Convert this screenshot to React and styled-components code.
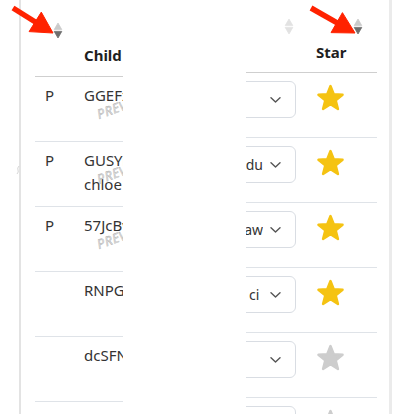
import React from 'react';
import styled, { createGlobalStyle } from 'styled-components';

const Global = createGlobalStyle`
  html, body { margin: 0; padding: 0; background: #fff; }
  body { font-family: "Noto Sans", "Open Sans", sans-serif; }
`;

const Page = styled.div`
  position: relative;
  width: 401px;
  height: 414px;
  overflow: hidden;
  background: #fff;
`;

const Frame = styled.div`
  margin-left: 19px;
  width: 373px;
  height: 414px;
  box-sizing: border-box;
  border-left: 2px solid #e3e3e3;
  border-right: 3px solid #ebebeb;
  padding: 0 12px 0 14px;
  display: flex;
`;

const Pane = styled.div`
  flex: 0 0 ${(p) => p.$width}px;
  overflow: hidden;
`;

const Spacer = styled.div`
  flex: 1;
`;

const Header = styled.div`
  display: grid;
  grid-template-columns: ${(p) => p.$cols};
  padding-top: ${(p) => p.$top}px;
  padding-bottom: ${(p) => p.$bottom}px;
  border-bottom: 1px solid #cfcfcf;
`;

const HeaderCell = styled.div`
  display: flex;
  flex-direction: column;
  align-items: ${(p) => (p.$end ? 'flex-end' : 'flex-start')};
  gap: ${(p) => p.$gap}px;
  padding-left: ${(p) => p.$pl || 0}px;
  padding-right: ${(p) => p.$pr || 0}px;
`;

const SortSlot = styled.div`
  height: 17px;
  display: flex;
  align-self: ${(p) => (p.$end ? 'flex-end' : 'auto')};
  margin-right: ${(p) => p.$mr || 0}px;
`;

const Label = styled.div`
  height: 20px;
  line-height: 20px;
  font-size: 15px;
  font-weight: 700;
  color: #1f1f1f;
  white-space: nowrap;
`;

const Row = styled.div`
  display: grid;
  grid-template-columns: ${(p) => p.$cols};
  height: 64px;
  border-bottom: 1px solid #dfe3e8;
`;

const TextCell = styled.div`
  position: relative;
  padding: 6px 10px;
  font-size: 15px;
  line-height: 24px;
  color: #333;
  word-break: break-word;
`;

const Stamp = styled.span`
  position: absolute;
  left: 21px;
  top: 31px;
  font-size: 13px;
  line-height: 14px;
  letter-spacing: 0.5px;
  font-style: italic;
  color: #e6e6e6;
  -webkit-text-stroke: 0.4px #a8a8a8;
  transform: rotate(-20deg);
  transform-origin: left top;
  white-space: nowrap;
`;

const SelectCell = styled.div`
  display: flex;
  justify-content: flex-end;
  align-items: flex-start;
  padding: 8px 10px 0 0;
`;

const Select = styled.div`
  flex: 0 0 100px;
  height: 37px;
  box-sizing: border-box;
  border: 1px solid #d9dde3;
  border-radius: 6px;
  display: flex;
  align-items: center;
  background: #fff;
`;

const Value = styled.div`
  flex: 1;
  min-width: 0;
  display: flex;
  justify-content: flex-end;
  overflow: hidden;
  font-size: 14px;
  color: #333;
  span {
    flex-shrink: 0;
    white-space: pre;
  }
`;

const ChevronBox = styled.div`
  flex: 0 0 32px;
  box-sizing: border-box;
  padding-left: 7px;
  display: flex;
  align-items: center;
`;

const StarCell = styled.div`
  padding: 10px 0 0 10px;
`;

const Overlay = styled.svg`
  position: absolute;
  left: 0;
  top: 0;
  pointer-events: none;
`;

const Grip = styled.svg`
  position: absolute;
  left: 16px;
  top: 165px;
`;

const Sorter = ({ active }) => (
  <svg width="10" height="17" viewBox="0 0 10 17">
    <path d="M5 1 L8.8 7.6 L1.2 7.6 Z" fill={active ? '#cbcbcb' : '#e2e2e2'} stroke={active ? '#cbcbcb' : '#e2e2e2'} strokeLinejoin="round" strokeWidth="0.8" />
    <path d="M1.2 9.4 L8.8 9.4 L5 16 Z" fill={active ? '#6e6e6e' : '#e2e2e2'} stroke={active ? '#6e6e6e' : '#e2e2e2'} strokeLinejoin="round" strokeWidth="0.8" />
  </svg>
);

const Chevron = () => (
  <svg width="11" height="6" viewBox="0 0 11 6">
    <polyline points="1,0.8 5.5,5 10,0.8" fill="none" stroke="#555" strokeWidth="1.4" strokeLinecap="round" strokeLinejoin="round" />
  </svg>
);

const STAR_POINTS = '12,2.5 14.7,9.28 21.99,9.76 16.37,14.42 18.17,21.49 12,17.6 5.83,21.49 7.63,14.42 2.01,9.76 9.3,9.28';

const Star = ({ on }) => {
  const c = on ? '#f5c312' : '#cdcdcd';
  return (
    <svg width="29" height="29" viewBox="0 0 24 24">
      <polygon points={STAR_POINTS} fill={c} stroke={c} strokeWidth="2" strokeLinejoin="round" />
    </svg>
  );
};

const Arrow = ({ x1, y1, x2, y2 }) => {
  const dx = x2 - x1;
  const dy = y2 - y1;
  const len = Math.hypot(dx, dy);
  const ux = dx / len;
  const uy = dy / len;
  const head = 21;
  const half = 11.5;
  const bx = x2 - ux * head;
  const by = y2 - uy * head;
  const px = -uy;
  const py = ux;
  return (
    <g fill="#ff2200" stroke="#ff2200">
      <line x1={x1} y1={y1} x2={bx + ux * 3} y2={by + uy * 3} strokeWidth="5.5" strokeLinecap="butt" />
      <polygon
        points={`${x2},${y2} ${bx + px * half},${by + py * half} ${bx - px * half},${by - py * half}`}
        strokeWidth="1"
        strokeLinejoin="round"
      />
    </g>
  );
};

const LEFT_COLS = '39px 120px';
const RIGHT_COLS = '60px 71px';

const leftRows = [
  { p: 'P', text: 'GGEFx7Qm', stamp: true },
  { p: 'P', text: 'GUSYmR2Kp9 chloe', stamp: true },
  { p: 'P', text: '57JcBvW', stamp: true },
  { p: '', text: 'RNPGk2' },
  { p: '', text: 'dcSFNq' },
  { p: '', text: 'aQ81' },
];

const rightRows = [
  { value: '', star: true },
  { value: 'Produ', star: true },
  { value: 'Draw', star: true },
  { value: 'ci\u00a0', star: true },
  { value: '', star: false },
  { value: '', star: false },
];

export default function App() {
  return (
    <Page>
      <Global />
      <Frame>
        <Pane $width={88}>
          <Header $cols={LEFT_COLS} $top={22} $bottom={11}>
            <HeaderCell $gap={6} $pl={18}>
              <SortSlot>
                <Sorter active />
              </SortSlot>
              <Label />
            </HeaderCell>
            <HeaderCell $gap={6} $pl={10}>
              <SortSlot />
              <Label>Child</Label>
            </HeaderCell>
          </Header>
          {leftRows.map((r, i) => (
            <Row key={i} $cols={LEFT_COLS}>
              <TextCell>{r.p}</TextCell>
              <TextCell>
                {r.text}
                {r.stamp && <Stamp>PREVIEW</Stamp>}
              </TextCell>
            </Row>
          ))}
        </Pane>
        <Spacer />
        <Pane $width={131}>
          <Header $cols={RIGHT_COLS} $top={18} $bottom={10}>
            <HeaderCell $gap={7} $end $pr={12}>
              <SortSlot>
                <Sorter />
              </SortSlot>
              <Label />
            </HeaderCell>
            <HeaderCell $gap={7} $pl={10}>
              <SortSlot $end $mr={14}>
                <Sorter active />
              </SortSlot>
              <Label>Star</Label>
            </HeaderCell>
          </Header>
          {rightRows.map((r, i) => (
            <Row key={i} $cols={RIGHT_COLS}>
              <SelectCell>
                <Select>
                  <Value>
                    <span>{r.value}</span>
                  </Value>
                  <ChevronBox>
                    <Chevron />
                  </ChevronBox>
                </Select>
              </SelectCell>
              <StarCell>
                <Star on={r.star} />
              </StarCell>
            </Row>
          ))}
        </Pane>
      </Frame>
      <Grip width="4" height="10" viewBox="0 0 4 10">
        <path d="M3 1 Q1 3 2 5 Q3 7 1 9" fill="none" stroke="#d6d6d6" strokeWidth="1" />
      </Grip>
      <Overlay width="401" height="414" viewBox="0 0 401 414">
        <Arrow x1={13} y1={8} x2={53} y2={33} />
        <Arrow x1={311} y1={8} x2={355} y2={33} />
      </Overlay>
    </Page>
  );
}
